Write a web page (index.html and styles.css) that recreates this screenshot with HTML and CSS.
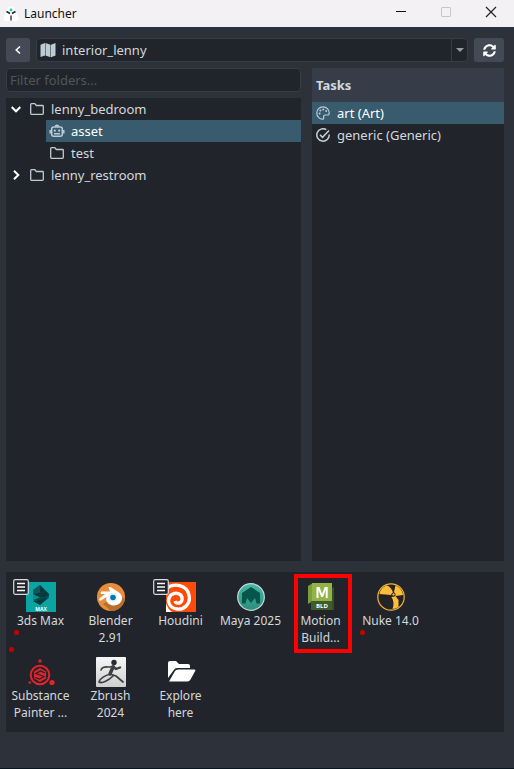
FILE: index.html
```html
<!DOCTYPE html>
<html lang="en">
<head>
<meta charset="utf-8">
<meta name="viewport" content="width=device-width, initial-scale=1">
<title>Launcher</title>
<link rel="stylesheet" href="styles.css">
</head>
<body>
<svg class="defs" aria-hidden="true">
  <symbol id="folder" viewBox="0 0 16 14"><path d="M1.700 2.500Q1.700 1.700 2.500 1.700H5.800l1.500 1.800h6.200q.8 0 .8.8v7.200q0 .8-.8.8H2.500q-.8 0-.8-.8z" fill="none" stroke="#bccbd4" stroke-width="1.300"/></symbol>
  <symbol id="list" viewBox="0 0 16 16"><rect x=".7" y=".7" width="14.600" height="14.600" rx="1.500" fill="#21252b" stroke="#d8dade" stroke-width="1.200"/><path d="M4 4.500h8M4 8h8M4 11.500h8" stroke="#fff" stroke-width="1.400"/></symbol>
</svg>
<header class="titlebar">
  <svg class="logo" viewBox="0 0 16 16" aria-hidden="true"><path d="M5 1.500Q8-.5 11 1.500l4.500 10.200q.5 3.300-3 3.300H3.500q-3.500 0-3-3.300z" fill="#fff"/><path d="M3.500 5.500l3.500 2M12.500 5.500l-3.500 2" stroke="#222" stroke-width="1.500"/><path d="M8 9.500v5" stroke="#555" stroke-width="1.700"/><circle cx="8" cy="4" r="1.400" fill="#10d5a0"/></svg>
  <h1>Launcher</h1>
  <button class="win" aria-label="Minimize"><svg viewBox="0 0 12 12"><path d="M1 5.500h10" stroke="#111"/></svg></button>
  <button class="win" aria-label="Maximize" disabled><svg viewBox="0 0 12 12"><rect x="1.500" y="1.500" width="9" height="9" rx=".5" fill="none" stroke="#c8c6c9"/></svg></button>
  <button class="win" aria-label="Close"><svg viewBox="0 0 12 12"><path d="M1 1l10 10M11 1L1 11" stroke="#222" stroke-width="1.200"/></svg></button>
</header>
<main class="launcher">
  <div class="toolbar">
    <button class="tool back" aria-label="Back"><svg viewBox="0 0 8 10"><path d="M6 1.500L2.200 5 6 8.500" fill="none" stroke="#fff" stroke-width="1.500"/></svg></button>
    <div class="project">
      <svg class="map" viewBox="0 0 16 16" aria-hidden="true"><path d="M.5 2.700L5 1v12.500L.5 15zM5.500 1l5 1.700v12.600l-5-1.800zM11 2.700L15.500 1v12.500L11 15.300z" fill="#bccbd4"/></svg>
      <select aria-label="Project"><option>interior_lenny</option></select>
      <span class="drop"><svg viewBox="0 0 8 4"><path d="M0 0h8L4 4z" fill="#999b9e"/></svg></span>
    </div>
    <button class="tool refresh" aria-label="Refresh"><svg viewBox="0 0 512 512" fill="#fff"><path d="M370.700 133.300C339.500 104 298.900 88 255.800 88c-77.500.1-144.300 53.200-162.800 126.900-1.300 5.400-6.100 9.100-11.700 9.100H24.100c-7.500 0-13.200-6.800-11.800-14.200C33.900 94.900 134.800 8 256 8c66.400 0 126.800 26.100 171.300 68.700L463 41c15.100-15.100 41-4.400 41 17v134c0 13.300-10.700 24-24 24H346c-21.400 0-32.100-25.900-17-41zM32 296h134c21.400 0 32.100 25.900 17 41l-41.800 41.800c31.300 29.300 71.800 45.300 115 45.300 77.500-.1 144.300-53.200 162.800-126.800 1.300-5.400 6.100-9.100 11.700-9.100h57.300c7.500 0 13.200 6.800 11.800 14.200C478.100 417.100 377.200 504 256 504c-66.400 0-126.800-26.100-171.300-68.700L49 471c-15.100 15.100-41 4.400-41-17V320c0-13.300 10.700-24 24-24z"/></svg></button>
  </div>
  <div class="panes">
    <section class="folders" aria-label="Folders">
      <input class="filter" type="text" aria-label="Filter folders" placeholder="Filter folders...">
      <ul class="tree">
        <li><div class="row"><button class="toggle" aria-label="Collapse lenny_bedroom"><svg viewBox="0 0 10 10"><path d="M.7 3L5 7.300 9.300 3" fill="none" stroke="#fff" stroke-width="2"/></svg></button><svg class="folder"><use href="#folder"/></svg><span>lenny_bedroom</span></div>
          <ul>
            <li class="row leaf selected"><svg class="folder" viewBox="0 0 16 14"><path d="M8 .5v2M6 1.800h4" stroke="#bccbd4" stroke-width="1.500"/><rect x="2.700" y="3" width="10.600" height="9.300" rx="2" fill="none" stroke="#bccbd4" stroke-width="1.500"/><path d="M1.200 6v3.500M14.800 6v3.500M5 9.700h6" stroke="#bccbd4" stroke-width="1.500"/><circle cx="5.800" cy="6.700" r="1.100" fill="#bccbd4"/><circle cx="10.200" cy="6.700" r="1.100" fill="#bccbd4"/></svg><span>asset</span></li>
            <li class="row leaf"><svg class="folder"><use href="#folder"/></svg><span>test</span></li>
          </ul>
        </li>
        <li class="row"><button class="toggle" aria-label="Expand lenny_restroom"><svg viewBox="0 0 10 10"><path d="M3 .7L7.300 5 3 9.300" fill="none" stroke="#fff" stroke-width="2"/></svg></button><svg class="folder"><use href="#folder"/></svg><span>lenny_restroom</span></li>
      </ul>
    </section>
    <section class="tasks" aria-labelledby="tasks-title">
      <h2 id="tasks-title">Tasks</h2>
      <ul>
        <li class="row task selected"><svg class="task-icon" viewBox="0 0 14 14"><path d="M7 .8C3.500.8.8 3.500.8 7s2.700 6.200 5.700 6.200c1.300 0 1.400-.8 1.200-1.700-.4-1.500.1-2.500 1.600-2.500h2c1.300 0 1.900-.8 1.900-2.100C13.200 3.500 10.500.8 7 .8z" fill="none" stroke="#bccbd4" stroke-width="1.200"/><g fill="#bccbd4"><circle cx="3.600" cy="7.600" r="1"/><circle cx="4.400" cy="4.600" r="1"/><circle cx="7.200" cy="3.400" r="1"/><circle cx="10.200" cy="5" r="1"/></g></svg><span>art (Art)</span></li>
        <li class="row task"><svg class="task-icon" viewBox="0 0 14 14"><path d="M10.300 1.700A6.200 6.200 0 1 0 13.200 6.500M4 6.700l2.500 2.600L13 2.500" fill="none" stroke="#c5d0d7" stroke-width="1.500"/></svg><span>generic (Generic)</span></li>
      </ul>
    </section>
  </div>
  <section class="actions" aria-label="Actions">
    <button class="action">
      <svg class="app" viewBox="0 0 30 30"><path fill="#0aa5a3" d="M0 0h30v30H0z"/><path fill="#087573" d="M7 8l7-5 9 9v4l-9 7-7-4 6-4-5-2z"/><path fill="#09595b" d="M7 8l7-5 1 6-8 3z"/><path fill="#063a3e" d="M14 3l9 9-9-2zM7 12l8-2 8 2v2l-8 2z"/><path fill="#0a8987" d="M7 13l6 2-6 3z"/><path fill="#07494c" d="M13 16l10-2-8 5-8-1z"/><path fill="#063a3e" d="M7 19l7-1 9-3-9 8z"/><text class="maxtext" x="15" y="28.500">MAX</text></svg>
      <svg class="badge"><use href="#list"/></svg><i class="dot near"></i><i class="dot far"></i><span>3ds Max</span>
    </button>
    <button class="action">
      <svg class="app" viewBox="0 0 30 30"><circle cx="15" cy="15" r="14" fill="#e88d3c"/><path d="M7 22l8 7c7 0 12-5 14-11l-6-6z" fill="#b96e30"/><path d="M12.500 5.500c1.500-1 2.500-.3 3.500.5l7 4.500c4 3 4 8 .5 11-4 3-10 2.500-12.500-1.500-1-1.700-1-3.500-.5-5L5 18.500c-1.500.7-2.500-1-1.500-2L9 12H6c-1.800 0-1.800-2.500 0-2.500h8z" fill="#fff"/><circle cx="17" cy="15.500" r="4.800" fill="#e4f3fd"/><circle cx="17" cy="15.500" r="2.800" fill="#0876ad"/></svg><span>Blender<br>2.91</span>
    </button>
    <button class="action">
      <svg class="app" viewBox="0 0 30 30"><path fill="#ff4a08" d="M0 0h30v30H0z"/><path d="M0 7C8 0 21 3 23 13c2 9-5 15-12 14-8-1-11-9-6-14 5-4 12-1 11 5-1 4-6 4-7 1" fill="none" stroke="#fff" stroke-width="3.300"/><path d="M0 22q2 5 6 8H0z" fill="#fff"/></svg><svg class="badge"><use href="#list"/></svg><span>Houdini</span>
    </button>
    <button class="action">
      <svg class="app" viewBox="0 0 30 30"><defs><linearGradient id="maya" x2="0" y2="1"><stop stop-color="#46b9a7"/><stop offset="1" stop-color="#2c8c7c"/></linearGradient></defs><circle cx="15" cy="15" r="13.300" fill="url(#maya)" stroke="#c7dcda" stroke-width="1.200"/><path d="M6 11l9-6 9 6v10.500h-3.500L19 16l-4 5-4-5-1.500 5.500H6z" fill="#05564b"/></svg><span>Maya 2025</span>
    </button>
    <button class="action highlighted">
      <svg class="app" viewBox="0 0 30 30"><path fill="#36501f" d="M5 18L28 5v23H5z"/><path fill="#789f3b" d="M2 4l5-3v18l-5 3z"/><path fill="#93b348" d="M6 1h20v18H6z"/><path fill="#435b28" d="M5 19h21v9H5z"/><path d="M10.500 16V5h3l2.600 7 2.600-7h3v11h-2V8l-2.700 7h-1.800l-2.700-7v8z" fill="#fff"/><text class="bldtext" x="16" y="26">BLD</text></svg><span>Motion<br>Build...</span>
    </button>
    <button class="action">
      <svg class="app" viewBox="0 0 30 30"><circle cx="15" cy="15" r="13.200" fill="#242424" stroke="#f6b63a" stroke-width="1.200"/><path d="M15 13L3.500 12C4 8 7 4.500 11 3.500c3 1 5 4 6 7zM18 10l1.500-6.500c4 1.500 7 5 7.500 9.500l-7.500 1zM15.500 15l4-1 3 4v7c-2 1.300-4 2-6 2 1.500-4 1.500-8-1-12z" fill="#ffbd3b"/><circle cx="17.500" cy="12.500" r="1.600" fill="#ffbd3b" stroke="#242424"/></svg><i class="dot near nuke"></i><span>Nuke 14.0</span>
    </button>
    <button class="action">
      <svg class="app" viewBox="0 0 30 30"><circle cx="14" cy="18" r="9.300" fill="none" stroke="#e2232b" stroke-width="2"/><g fill="#e2232b"><circle cx="14" cy="4" r="1.700"/><circle cx="3.800" cy="25.500" r="1.300"/><circle cx="26" cy="25.500" r="2.600"/><path d="M8 14.500L14 11l6 3.500v7L14 25l-6-3.500z"/></g><path d="M19 16l-4.500-2L10 16.500l8 3-4.500 2.500L9 20.500" fill="none" stroke="#21252b" stroke-width="1.300"/></svg><span>Substance<br>Painter ...</span>
    </button>
    <button class="action">
      <svg class="app" viewBox="0 0 30 30"><defs><linearGradient id="zb" x2="0" y2="1"><stop stop-color="#f7f7f7"/><stop offset="1" stop-color="#cfcfcf"/></linearGradient></defs><rect width="30" height="30" rx="1" fill="url(#zb)"/><circle cx="18" cy="5.500" r="2.700" fill="#292d30"/><g fill="none" stroke="#3c4042" stroke-linecap="round" stroke-linejoin="round"><path d="M5 13c1-4 5-3 9-3l4-1" stroke-width="1.600"/><path d="M17 10l-3 7" stroke-width="3.500"/><path d="M17 9.500l3 2.500 4-1.500" stroke-width="2.400"/><path d="M14 17l6 2 7 6M15 17c-5 1-11 4-12 8 3 2 10-2 14-6" stroke-width="1.700"/></g></svg><span>Zbrush<br>2024</span>
    </button>
    <button class="action">
      <svg class="app" viewBox="0 0 30 30"><path fill="#fff" d="M2 21V6q0-2 2-2h6l3 3h9q2 0 2 2v2H11q-2 0-3 1.700zM3 24.500l6-10.500q1-1.500 3-1.500h16.500q1.500 0 .7 1.500l-4.700 8.500q-1 2-3 2z"/></svg><span>Explore<br>here</span>
    </button>
  </section>
</main>
</body>
</html>
```
FILE: styles.css
```css
*, *::after { box-sizing: border-box; }
body {
  display: flex;
  flex-direction: column;
  min-height: 100vh;
  margin: 0;
  background: #2c313a;
  border-bottom: 1px solid #08151e;
  color: #d3d8de;
  font: 13px/22px "Noto Sans", sans-serif;
}
button, input, select { font: inherit; color: inherit; border: 0; padding: 0; margin: 0; }
ul { list-style: none; margin: 0; padding: 0; }
svg { display: block; flex-shrink: 0; }
.defs { position: absolute; width: 0; height: 0; }

.titlebar { display: flex; align-items: center; height: 27px; padding-right: 1px; background: #f3f1f4; color: #111; }
.logo { width: 16px; height: 16px; margin: 0 5px 0 3px; }
h1 { flex: 1; margin: 0; font-size: 12px; font-weight: 400; line-height: 22px; }
.win { display: flex; align-items: center; justify-content: center; width: 45px; height: 26px; padding-bottom: 3px; background: none; }
.win svg { width: 12px; height: 12px; }

.launcher { flex: 1; display: flex; flex-direction: column; padding: 11px 10px 36px 6px; }
.toolbar { display: flex; gap: 6px; height: 24px; }
.tool { display: flex; align-items: center; justify-content: center; border-radius: 3px; background: #434a56; }
.back { width: 24px; }
.back svg { width: 8px; height: 10px; }
.refresh { width: 30px; }
.refresh svg { width: 13px; height: 13px; }
.project { flex: 1; display: flex; align-items: center; border: 1px solid #373d48; border-radius: 4px; background: #21252b; }
.map { width: 16px; height: 16px; margin: 0 6px 0 3px; }
.project select { flex: 1; min-width: 0; height: 22px; appearance: none; background: none; }
.drop { display: flex; align-items: center; justify-content: center; width: 16px; height: 22px; border-left: 1px solid #373d48; pointer-events: none; }
.drop svg { width: 8px; height: 4px; }

.panes { flex: 1; display: grid; grid-template-columns: 295fr 192fr; gap: 11px; margin-top: 6px; }
.folders { display: flex; flex-direction: column; gap: 6px; min-width: 0; }
.filter { width: 100%; height: 24px; padding: 0 3px; border: 1px solid #373d48; border-radius: 4px; background: #21252b; }
.filter::placeholder { color: #50555b; opacity: 1; }
.tree { flex: 1; background: #21252b; }
.row { display: flex; align-items: center; height: 22px; white-space: nowrap; }
.toggle { display: flex; align-items: center; justify-content: center; width: 20px; height: 22px; margin-right: 3px; background: none; }
.toggle svg { width: 10px; height: 10px; }
.folder { width: 16px; height: 14px; margin-right: 6px; }
.leaf { margin-left: 40px; padding-left: 3px; }
.selected { background: #395b6e; color: #fff; }
.tasks { background: #21252b; min-width: 0; }
h2 { height: 34px; margin: 0; padding: 0 4px; background: #373d48; font-size: 13px; line-height: 34px; }
.task { padding-left: 4px; }
.task-icon { width: 14px; height: 14px; margin-right: 7px; }

.actions {
  display: grid;
  grid-template-columns: repeat(auto-fill, 70px);
  grid-auto-rows: 65px;
  gap: 10px 0;
  align-content: start;
  min-height: 160px;
  margin-top: 11px;
  padding: 10px 10px 0 0;
  background: #21252b;
}
.action { position: relative; display: flex; flex-direction: column; align-items: center; padding-right: 1px; background: none; font-size: 12px; line-height: 17px; text-align: center; }
.app { width: 30px; height: 30px; }
.action span { white-space: nowrap; }
.badge { position: absolute; left: 7px; top: -3px; width: 16px; height: 16px; }
.highlighted::after { content: ""; position: absolute; left: 8px; top: -8px; width: 58px; height: 79px; border: 4px solid #f00; }
.dot { position: absolute; width: 5px; height: 5px; border-radius: 50%; background: #c90000; }
.near { left: 8px; top: 48px; }
.far { left: 3px; top: 65px; }
.nuke { left: 4px; }
.maxtext { font: bold 5px "Open Sans", sans-serif; fill: #fff; text-anchor: middle; }
.bldtext { font: bold 6px "Open Sans", sans-serif; fill: #fff; text-anchor: middle; }
```
